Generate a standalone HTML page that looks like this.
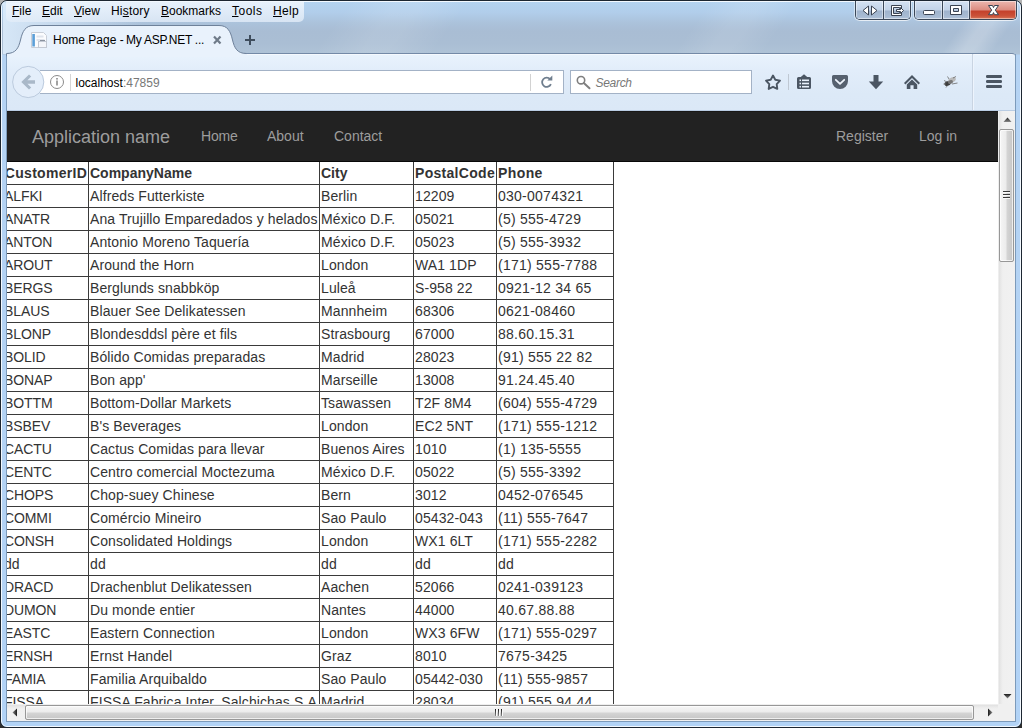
<!DOCTYPE html>
<html lang="en">
<head>
<meta charset="utf-8">
<title>Home Page - My ASP.NET Application</title>
<style>
*{box-sizing:border-box}
html,body{margin:0;padding:0}
body{width:1022px;height:728px;position:relative;overflow:hidden;background:linear-gradient(180deg,#b4b4b4 0,#9a9a9a 40px,#3c3c3c 690px,#2e2e2e 100%);font-family:"Liberation Sans",sans-serif}
.abs{position:absolute}
/* ---------- window frame ---------- */
#frame{position:absolute;left:0;top:0;width:1022px;height:728px;border:1px solid #1c2631;border-radius:7px;overflow:hidden;
 background:linear-gradient(180deg,#b4d3f0 0px,#b1cdea 12px,#abc2db 22px,#a9bdd4 30px,#aabed4 42px,#afc3d7 53px,#b5d3f3 54px,#b2d3f6 100%)}
#frame:before{content:"";position:absolute;left:0;top:0;right:0;bottom:0;border:1px solid #f3f9ff;border-radius:6px}
#lglow{position:absolute;left:2px;top:2px;width:140px;height:51px;background:linear-gradient(90deg,rgba(222,238,253,.85),rgba(215,234,252,0))}
.streak{position:absolute;top:1px;height:52px;transform:skewX(-35deg);background:linear-gradient(90deg,rgba(255,255,255,0),rgba(255,255,255,.22) 40%,rgba(255,255,255,.22) 60%,rgba(255,255,255,0))}
.edge{position:absolute;background:#7c9aba}
/* ---------- menu bar ---------- */
#menubar{position:absolute;left:6px;top:2px;width:298px;height:20px;border-radius:0 0 5px 5px;background:linear-gradient(180deg,rgba(240,246,253,.85),rgba(226,236,248,.8))}
.mi{position:absolute;top:4px;font-size:12px;line-height:14px;color:#000;white-space:nowrap}
.mi u{text-decoration:underline}
/* ---------- toolbar ---------- */
#toolbar{position:absolute;left:7px;top:53px;width:1008px;height:58px;border-top:1px solid #748aa7;border-bottom:1px solid #b9cce3;border-radius:0 3px 0 0;box-shadow:inset 0 1px 0 rgba(255,255,255,.55);background:linear-gradient(180deg,#e9f3fd 0,#e2edfa 16px,#dce9f7 40px,#dbe8f7 100%)}
#urlbar{position:absolute;left:40px;top:70px;width:524px;height:24px;border:1px solid #a3b2c6;border-left:none;background:#fff}
#search{position:absolute;left:570px;top:70px;width:182px;height:24px;border:1px solid #a3b2c6;background:#fff}
.ut{position:absolute;font-size:12px;line-height:14px;white-space:nowrap}
/* ---------- page ---------- */
#view{position:absolute;left:7px;top:111px;width:991px;height:593px;overflow:hidden;background:#fff}
#nav{position:absolute;left:0;top:0;width:991px;height:51px;background:#222;box-shadow:inset 0 1px 0 #191817;border-bottom:1px solid #080808;z-index:2}
#nav a{position:absolute;top:15px;line-height:20px;font-size:14px;color:#9d9d9d;text-decoration:none;white-space:nowrap}
#nav a.brand{font-size:18px}
table{position:absolute;left:-1px;top:50px;width:608px;border-collapse:collapse;border-spacing:0;font-size:14px;line-height:20px;color:#333;table-layout:fixed}
td,th{border:1px solid #3a3a3a;padding:1px;height:23px;text-align:left;white-space:nowrap;overflow:hidden}
td{letter-spacing:.1px}
td:nth-child(5){letter-spacing:.25px}
td:first-child,th:first-child{text-indent:-4px}
td:first-child{letter-spacing:-.1px}
th{font-weight:bold}
th:first-child{letter-spacing:.3px;text-indent:-3.2px}
/* ---------- scrollbars ---------- */
#vs{position:absolute;left:998px;top:111px;width:17px;height:593px;background:linear-gradient(90deg,#f4f4f4 0,#e3e3e3 1.5px,#eaeaea 3px,#f0f0f0 5px,#f1f1f1 100%)}
#hs{position:absolute;left:7px;top:704px;width:991px;height:17px;background:linear-gradient(180deg,#f4f4f4 0,#e3e3e3 1.5px,#eaeaea 3px,#f0f0f0 5px,#f1f1f1 100%)}
#corner{position:absolute;left:998px;top:704px;width:17px;height:17px;background:#f0f0f0}

/* ---------- tab ---------- */
#tabsvg{position:absolute;left:0;top:20px}
.tt{position:absolute;font-size:12px;line-height:14px;white-space:nowrap;color:#000}
/* ---------- window buttons ---------- */
.wb{position:absolute;top:1px;height:19px;border:1px solid #3b4859;border-top:none;border-radius:0 0 5px 5px;overflow:hidden;box-shadow:1px 1px 0 rgba(255,255,255,.45),-1px 1px 0 rgba(255,255,255,.45)}
.wb i{position:absolute;top:0;height:18px;display:block;background:linear-gradient(180deg,#d4e2f3 0,#c2d3e8 9px,#9fb3cd 10px,#a9bcd4 16px,#bccde2 19px);box-shadow:inset 0 0 0 1px rgba(255,255,255,.45)}
.wb i.sep{width:1px;background:#3b4859;box-shadow:none}
.wb i.close{background:linear-gradient(180deg,#ecb7af 0,#dc8c80 9px,#c4402b 10px,#cb5239 15px,#dc8466 19px)}
/* ---------- scrollbar parts ---------- */
.thumbv{position:absolute;left:999px;top:129px;width:15px;height:133px;border:1px solid #979797;border-radius:2px;background:linear-gradient(90deg,#f6f6f6 0,#ececec 45%,#d4d4d4 55%,#c6c6c6 100%);box-shadow:inset 0 0 0 1px rgba(255,255,255,.7)}
.thumbh{position:absolute;left:25px;top:705px;width:949px;height:15px;border:1px solid #979797;border-radius:2px;background:linear-gradient(180deg,#f6f6f6 0,#ececec 45%,#d4d4d4 55%,#c6c6c6 100%);box-shadow:inset 0 0 0 1px rgba(255,255,255,.7)}
</style>
</head>
<body>
<div id="frame">
 <div id="lglow"></div>
 <div class="streak" style="left:958px;width:50px"></div>
 <div class="streak" style="left:330px;width:120px;opacity:.5"></div>
 <div class="streak" style="left:690px;width:90px;opacity:.45"></div>
</div>
<div class="edge" style="left:6px;top:54px;width:1px;height:668px"></div>
<div class="edge" style="left:1015px;top:54px;width:1px;height:668px"></div>
<div class="edge" style="left:6px;top:721px;width:1010px;height:1px"></div>

<div id="menubar"></div>
<span class="mi" style="left:12px"><u>F</u>ile</span>
<span class="mi" style="left:42px"><u>E</u>dit</span>
<span class="mi" style="left:74px"><u>V</u>iew</span>
<span class="mi" style="left:111px;letter-spacing:.2px">Hi<u>s</u>tory</span>
<span class="mi" style="left:161px"><u>B</u>ookmarks</span>
<span class="mi" style="left:232px;letter-spacing:.5px"><u>T</u>ools</span>
<span class="mi" style="left:273px;letter-spacing:.3px"><u>H</u>elp</span>

<div id="toolbar"></div>
<div id="urlbar"></div>
<div id="search"></div>
<span class="ut" style="left:75.5px;top:76px;color:#000">localhost<span style="color:#777">:47859</span></span>
<span class="ut" style="left:595.5px;top:76px;color:#777;font-style:italic;letter-spacing:-.3px">Search</span>


<!-- tab strip -->
<svg id="tabsvg" width="300" height="40" viewBox="0 20 300 40">
 <path d="M6.5,53.5 C16,53.5 18.5,48 20.5,40 C22.5,31 25.5,25.5 34,25.5 L219,25.5 C227.5,25.5 230.5,31 232.5,40 C234.5,48 237,53.5 246.5,53.5 L246.5,56 L6.5,56 Z" fill="#e9f2fc" stroke="#6e819a" stroke-width="1"/>
 <rect x="7" y="54" width="240" height="3" fill="#e9f2fc"/>
 <!-- favicon -->
 <g>
  <path d="M31.5,32.5 h12 l3,3 v12 h-15 z" fill="#fbfcfe" stroke="#c9cfd8" stroke-width="1"/>
  <rect x="32.300" y="34" width="2.600" height="12.500" fill="#5b9fd8"/>
  <rect x="36.5" y="35.5" width="7" height="2" fill="#dfe4ec"/>
  <rect x="36.5" y="39" width="8" height="2" fill="#dfe4ec"/>
  <rect x="38.5" y="41.5" width="8" height="6" fill="#f4f6fa" stroke="#c3c9d3" stroke-width="1"/>
  <rect x="40" y="40" width="5" height="1" fill="#8a929e"/>
 </g>
 <!-- close -->
 <path d="M214,36.5 L220.5,43.5 M220.5,36.5 L214,43.5" stroke="#6f7b89" stroke-width="2.2" fill="none"/>
 <!-- new tab plus -->
 <path d="M245,40 h10 M250,35 v10" stroke="#3f4d5d" stroke-width="2" fill="none"/>
</svg>
<span class="tt" style="left:53px;top:33px">Home Page -</span><span class="tt" style="left:126px;top:33px;letter-spacing:-.25px">My ASP.NET ...</span>

<!-- window buttons -->
<div class="wb" style="left:855px;width:56px">
 <i style="left:0;width:27px"></i><i class="sep" style="left:27px"></i><i style="left:28px;width:26px"></i>
</div>
<div class="wb" style="left:914px;width:103px">
 <i style="left:0;width:27px"></i><i class="sep" style="left:27px"></i><i style="left:28px;width:26px"></i><i class="sep" style="left:54px"></i><i class="close" style="left:55px;width:46px"></i>
</div>
<svg class="abs" style="left:855px;top:0" width="165" height="20" viewBox="855 0 165 20">
 <g fill="#fff" stroke="#3a4352" stroke-width="1">
  <path d="M868.5,6 v9 l-5.5,-4.5 z"/><path d="M871.5,6 v9 l5.5,-4.5 z"/>
  <path d="M891.5,5.5 h10 v3 h-2 v-1 h-6 v6 h6 v-1 h2 v3 h-10 z"/>
  <path d="M896.5,9.5 h4 v-2 l3,3 l-3,3 v-2 h-4 z"/>
  <rect x="923.5" y="10.5" width="11" height="4" rx="1"/>
  <path d="M950.5,5.500 h11 v9 h-11 z M953.5,8.500 v3 h5 v-3 z" fill-rule="evenodd"/>
  <path d="M988.500,5.500 h4 l1,2.100 l1,-2.100 h4 l-3.200,4.600 l3.200,4.600 h-4 l-1,-2.100 l-1,2.100 h-4 l3.200,-4.600 z"/>
 </g>
</svg>

<!-- nav toolbar widgets -->
<svg class="abs" style="left:7px;top:54px" width="1008" height="57" viewBox="7 54 1008 57">
 <!-- back button -->
 <circle cx="28.200" cy="82" r="15.600" fill="#e4eefa" stroke="#bccbde" stroke-width="1"/>
 <path d="M21.300,82 L29,74.400 L31.200,76.600 L27.400,80.300 L35,80.300 L35,83.700 L27.400,83.700 L31.200,87.400 L29,89.600 Z" fill="#a9b8c8"/>
 <!-- identity (i) -->
 <circle cx="57" cy="82" r="6.500" fill="none" stroke="#8b8b8b" stroke-width="1"/>
 <rect x="56.200" y="80.500" width="1.600" height="5" fill="#8b8b8b"/><rect x="56.200" y="78" width="1.600" height="1.600" fill="#8b8b8b"/>
 <rect x="70" y="74" width="1" height="17" fill="#d6d6d6"/>
 <!-- reload -->
 <rect x="530" y="74" width="1" height="17" fill="#d2d2d2"/>
 <path d="M550.200,79.300 A4.600,4.600 0 1 0 550.900,84.200" fill="none" stroke="#6f7e8e" stroke-width="1.800"/>
 <path d="M547.300,80.600 L552.300,80.600 L552.300,75.600 Z" fill="#6f7e8e"/>
 <!-- search glass -->
 <circle cx="581" cy="80.200" r="3.700" fill="none" stroke="#7f7f7f" stroke-width="1.600"/>
 <path d="M583.800,83 L589.500,88.300" stroke="#7f7f7f" stroke-width="2" stroke-linecap="round"/>
 <!-- star -->
 <path d="M773.0,75.5 L775.3,79.7 L780.0,80.6 L776.7,84.1 L777.3,88.9 L773.0,86.8 L768.7,88.9 L769.3,84.1 L766.0,80.6 L770.7,79.7 Z" fill="none" stroke="#4b5663" stroke-width="1.900" stroke-linejoin="round"/>
 <rect x="788" y="74" width="1" height="16" fill="#bfc8d3"/>
 <!-- bookmarks list (clipboard) -->
 <path d="M798.500,77 h2.300 l3.200,-2.800 l3.200,2.800 h2.300 a1.500,1.500 0 0 1 1.500,1.500 v9 a1.500,1.500 0 0 1 -1.500,1.500 h-11 a1.500,1.500 0 0 1 -1.500,-1.500 v-9 a1.500,1.500 0 0 1 1.500,-1.500 z" fill="#4b5663"/>
 <g fill="#e9f1fb"><rect x="802" y="79.500" width="7" height="1.600"/><rect x="802" y="82.700" width="7" height="1.600"/><rect x="802" y="85.900" width="7" height="1.600"/>
 <rect x="799.500" y="79.500" width="1.500" height="1.600"/><rect x="799.500" y="82.700" width="1.500" height="1.600"/><rect x="799.500" y="85.900" width="1.500" height="1.600"/></g>
 <!-- pocket -->
 <path d="M833.500,75 h13 a1.500,1.500 0 0 1 1.500,1.500 v4.500 a8,8 0 0 1 -16,0 v-4.500 a1.500,1.500 0 0 1 1.500,-1.500 z" fill="#56616f"/>
 <path d="M835.800,79.800 L840,83.800 L844.200,79.800" fill="none" stroke="#eef4fc" stroke-width="1.800" stroke-linecap="round" stroke-linejoin="round"/>
 <!-- download -->
 <path d="M873.500,75 h5 v6.500 h4.700 l-7.200,7.700 l-7.200,-7.700 h4.700 z" fill="#4b5663"/>
 <!-- home -->
 <path d="M912,75 L920,83 L918.600,84.400 L912,77.900 L905.400,84.400 L904,83 Z" fill="#4b5663"/>
 <path d="M906.800,84.600 L912,79.600 L917.200,84.600 V89 H913.600 V85.200 H910.400 V89 H906.800 Z" fill="#4b5663"/>
 <!-- bug icon -->
 <g>
  <ellipse cx="947.500" cy="83.500" rx="3.200" ry="2.300" fill="#3d3d3d" transform="rotate(-25 947.500 83.500)"/>
  <ellipse cx="952" cy="80" rx="4" ry="2.500" fill="#b9b9b9" transform="rotate(-25 952 80)"/>
  <ellipse cx="950.500" cy="82" rx="2.600" ry="1.800" fill="#777" transform="rotate(-25 950.500 82)"/>
  <path d="M944,80.500 L947,82 M943.500,84 L946,84 M946,87.500 L947.500,85.500 M952,84 L957.500,83 M953,78 L956,76.500 M949,79 L947.500,76.500" stroke="#6a6a6a" stroke-width=".8" fill="none"/>
 </g>
 <rect x="972" y="54" width="1" height="56" fill="#c9d4e2"/><rect x="973" y="54" width="1" height="56" fill="#edf4fd"/>
 <!-- hamburger -->
 <g fill="#4b5663"><rect x="986" y="75" width="16" height="3" rx="1.200"/><rect x="986" y="80" width="16" height="3" rx="1.200"/><rect x="986" y="85" width="16" height="3" rx="1.200"/></g>
</svg>

<div id="view">
 <div id="nav">
  <a class="brand" style="left:25px;top:16px">Application name</a>
  <a style="left:194px;letter-spacing:-.2px">Home</a>
  <a style="left:260px">About</a>
  <a style="left:327px">Contact</a>
  <a style="left:829px">Register</a>
  <a style="left:912px">Log in</a>
 </div>
 <table>
  <colgroup><col style="width:82px"><col style="width:231px"><col style="width:94px"><col style="width:83px"><col style="width:117px"></colgroup>
  <tr><th>CustomerID</th><th>CompanyName</th><th>City</th><th style="letter-spacing:.3px">PostalCode</th><th style="letter-spacing:.4px">Phone</th></tr>
  <tr><td>ALFKI</td><td>Alfreds Futterkiste</td><td>Berlin</td><td>12209</td><td>030-0074321</td></tr>
  <tr><td>ANATR</td><td>Ana Trujillo Emparedados y helados</td><td>México D.F.</td><td>05021</td><td>(5) 555-4729</td></tr>
  <tr><td>ANTON</td><td>Antonio Moreno Taquería</td><td>México D.F.</td><td>05023</td><td>(5) 555-3932</td></tr>
  <tr><td>AROUT</td><td>Around the Horn</td><td>London</td><td>WA1 1DP</td><td>(171) 555-7788</td></tr>
  <tr><td>BERGS</td><td>Berglunds snabbköp</td><td>Luleå</td><td>S-958 22</td><td>0921-12 34 65</td></tr>
  <tr><td>BLAUS</td><td>Blauer See Delikatessen</td><td>Mannheim</td><td>68306</td><td>0621-08460</td></tr>
  <tr><td>BLONP</td><td>Blondesddsl père et fils</td><td>Strasbourg</td><td>67000</td><td>88.60.15.31</td></tr>
  <tr><td>BOLID</td><td>Bólido Comidas preparadas</td><td>Madrid</td><td>28023</td><td>(91) 555 22 82</td></tr>
  <tr><td>BONAP</td><td>Bon app'</td><td>Marseille</td><td>13008</td><td>91.24.45.40</td></tr>
  <tr><td>BOTTM</td><td>Bottom-Dollar Markets</td><td>Tsawassen</td><td>T2F 8M4</td><td>(604) 555-4729</td></tr>
  <tr><td>BSBEV</td><td>B's Beverages</td><td>London</td><td>EC2 5NT</td><td>(171) 555-1212</td></tr>
  <tr><td>CACTU</td><td>Cactus Comidas para llevar</td><td>Buenos Aires</td><td>1010</td><td>(1) 135-5555</td></tr>
  <tr><td>CENTC</td><td>Centro comercial Moctezuma</td><td>México D.F.</td><td>05022</td><td>(5) 555-3392</td></tr>
  <tr><td>CHOPS</td><td>Chop-suey Chinese</td><td>Bern</td><td>3012</td><td>0452-076545</td></tr>
  <tr><td>COMMI</td><td>Comércio Mineiro</td><td>Sao Paulo</td><td>05432-043</td><td>(11) 555-7647</td></tr>
  <tr><td>CONSH</td><td>Consolidated Holdings</td><td>London</td><td>WX1 6LT</td><td>(171) 555-2282</td></tr>
  <tr><td>dd</td><td>dd</td><td>dd</td><td>dd</td><td>dd</td></tr>
  <tr><td>DRACD</td><td>Drachenblut Delikatessen</td><td>Aachen</td><td>52066</td><td>0241-039123</td></tr>
  <tr><td>DUMON</td><td>Du monde entier</td><td>Nantes</td><td>44000</td><td>40.67.88.88</td></tr>
  <tr><td>EASTC</td><td>Eastern Connection</td><td>London</td><td>WX3 6FW</td><td>(171) 555-0297</td></tr>
  <tr><td>ERNSH</td><td>Ernst Handel</td><td>Graz</td><td>8010</td><td>7675-3425</td></tr>
  <tr><td>FAMIA</td><td>Familia Arquibaldo</td><td>Sao Paulo</td><td>05442-030</td><td>(11) 555-9857</td></tr>
  <tr><td>FISSA</td><td>FISSA Fabrica Inter. Salchichas S.A.</td><td>Madrid</td><td>28034</td><td>(91) 555 94 44</td></tr>
 </table>
</div>
<div id="vs"></div>
<div id="hs"></div>
<div id="corner"></div>
<div class="thumbv"></div>
<div class="thumbh"></div>
<svg class="abs" style="left:7px;top:111px" width="1008" height="610" viewBox="7 111 1008 610">
 <defs><linearGradient id="ag" x1="0" y1="0" x2="0" y2="1"><stop offset="0" stop-color="#1a1a1a"/><stop offset="1" stop-color="#8a8a8a"/></linearGradient>
 <linearGradient id="ah" x1="0" y1="0" x2="1" y2="0"><stop offset="0" stop-color="#8a8a8a"/><stop offset="1" stop-color="#1a1a1a"/></linearGradient><linearGradient id="ah2" x1="0" y1="0" x2="1" y2="0"><stop offset="0" stop-color="#1a1a1a"/><stop offset="1" stop-color="#8a8a8a"/></linearGradient></defs>
 <path d="M1007.500,117.500 L1011.500,122 L1003.500,122 Z" fill="url(#ag)"/>
 <path d="M1007.500,698.500 L1011.500,694 L1003.500,694 Z" fill="url(#ag)"/>
 <path d="M12.500,712.500 L17,708.500 L17,716.500 Z" fill="url(#ah)"/>
 <path d="M992.500,712.500 L988,708.500 L988,716.500 Z" fill="url(#ah2)"/>
 <g fill="#3c3c3c"><rect x="1003" y="191" width="7" height="1"/><rect x="1003" y="194" width="7" height="1"/><rect x="1003" y="197" width="7" height="1"/></g>
 <g fill="#fafafa"><rect x="1003" y="192" width="7" height="1"/><rect x="1003" y="195" width="7" height="1"/><rect x="1003" y="198" width="7" height="1"/></g>
 <g fill="url(#ag)"><rect x="495" y="709" width="1" height="7"/><rect x="498" y="709" width="1" height="7"/><rect x="501" y="709" width="1" height="7"/></g>
 <g fill="#fafafa"><rect x="496" y="709" width="1" height="7"/><rect x="499" y="709" width="1" height="7"/><rect x="502" y="709" width="1" height="7"/></g>
</svg>

</body>
</html>
